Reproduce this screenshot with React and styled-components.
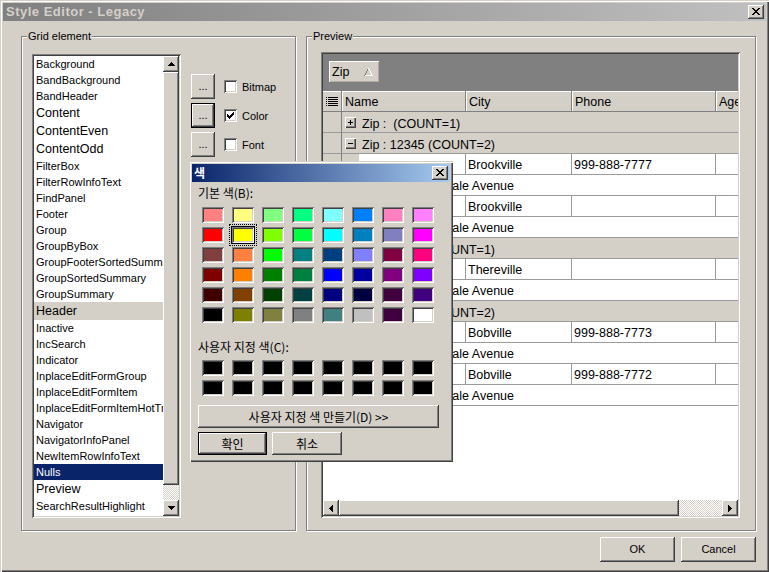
import React from 'react';
import styled, { createGlobalStyle, css } from 'styled-components';

const FACE = '#d4d0c8';
const UI = `'Liberation Sans', Arial, sans-serif`;
const KR = `'Noto Sans CJK KR', 'Liberation Sans', sans-serif`;
const LINE = '#9a9a9a';

const raised = css`
  box-shadow: inset -1px -1px #404040, inset 1px 1px #ffffff, inset -2px -2px #808080, inset 2px 2px ${FACE};
`;
const sunken = css`
  box-shadow: inset 1px 1px #808080, inset -1px -1px #ffffff, inset 2px 2px #404040, inset -2px -2px ${FACE};
`;
const frame = css`
  box-shadow: inset 1px 1px ${FACE}, inset 2px 2px #ffffff, inset -1px -1px #404040, inset -2px -2px #808080;
`;
const checker = css`
  background-color: #fff;
  background-image: repeating-conic-gradient(${FACE} 0 25%, #ffffff 0 50%);
  background-size: 2px 2px;
`;

const GlobalStyle = createGlobalStyle`
  *, *::before, *::after { box-sizing: border-box; }
  html, body { margin: 0; padding: 0; background: ${FACE}; }
  body { width: 769px; height: 572px; overflow: hidden; }
`;

/* ---------- pixel icons ---------- */
const PIX = { '#': '#000', w: '#fff', g: '#808080' };
const PixelIcon = ({ rows }) => (
  <svg width={rows[0].length} height={rows.length} shapeRendering="crispEdges" style={{ display: 'block' }}>
    {rows.flatMap((r, y) =>
      [...r].map((c, x) =>
        PIX[c] ? <rect key={`${x}-${y}`} x={x} y={y} width="1" height="1" fill={PIX[c]} /> : null
      )
    )}
  </svg>
);
const ICON = {
  x: ['##....##', '.##..##.', '..####..', '...##...', '..####..', '.##..##.', '##....##'],
  up: ['...#...', '..###..', '.#####.', '#######'],
  down: ['#######', '.#####.', '..###..', '...#...'],
  left: ['...#', '..##', '.###', '####', '.###', '..##', '...#'],
  right: ['#...', '##..', '###.', '####', '###.', '##..', '#...'],
  check: ['......#', '.....##', '#...###', '##.###.', '#####..', '.###...', '..#....'],
  plus: ['..#..', '..#..', '#####', '..#..', '..#..'],
  minus: ['.....', '.....', '#####', '.....', '.....'],
  lines: ['#.##########', '............', '#.##########', '............', '#.##########', '............', '#.##########', '............', '#.##########'],
  sort: ['....w....', '...g.w...', '...g.w...', '..g...w..', '..g...w..', '.g.....w.', '.g.....w.', 'gwwwwwwww'],
};

/* ---------- window ---------- */
const Window = styled.div`
  position: relative;
  width: 769px;
  height: 572px;
  padding: 3px;
  background: ${FACE};
  ${frame}
  display: flex;
  flex-direction: column;
  font-family: ${UI};
  font-size: 11px;
  color: #000;
`;
const TitleBar = styled.div`
  flex: none;
  height: 18px;
  display: flex;
  align-items: center;
  padding: 0 2px 0 ${p => p.$pad}px;
  background: linear-gradient(to right, ${p => p.$from}, ${p => p.$to});
`;
const TitleText = styled.span`
  font-family: ${p => (p.$kr ? KR : UI)};
  font-weight: bold;
  font-size: ${p => (p.$kr ? 12 : 13)}px;
  letter-spacing: ${p => (p.$kr ? 0 : 0.5)}px;
  line-height: 18px;
  color: ${p => p.$color};
  white-space: nowrap;
`;
const CaptionButton = styled.span`
  margin-left: auto;
  width: 16px;
  height: 14px;
  background: ${FACE};
  ${raised}
  display: flex;
  align-items: center;
  justify-content: center;
  padding: 0 1px 1px 0;
`;
const Body = styled.div`
  flex: 1;
  display: flex;
  flex-direction: column;
  padding: 15px 10px 0 18px;
`;
const GroupsRow = styled.div`
  display: flex;
  gap: 10px;
  height: 495px;
`;
const GroupBox = styled.div`
  position: relative;
  flex: none;
  width: ${p => p.$w}px;
  height: 100%;
  border: 1px solid #808080;
  box-shadow: inset 1px 1px #ffffff, 1px 1px #ffffff;
  display: flex;
  align-items: flex-start;
  padding: ${p => p.$pad};
`;
const Caption = styled.span`
  position: absolute;
  top: -7px;
  left: 5px;
  padding: 0 1px;
  background: ${FACE};
  font-size: 11px;
  line-height: 13px;
`;

/* ---------- list ---------- */
const ListBox = styled.div`
  flex: none;
  width: 149px;
  height: 464px;
  padding: 2px;
  background: #fff;
  ${sunken}
  display: flex;
`;
const ListItems = styled.div`
  flex: 1;
  min-width: 0;
  overflow: hidden;
  display: flex;
  flex-direction: column;
`;
const ListItem = styled.div`
  flex: none;
  height: ${p => (p.$big ? 18 : 16)}px;
  line-height: ${p => (p.$big ? 18 : 16)}px;
  padding-left: 2px;
  font-size: ${p => (p.$big ? 12.5 : 11)}px;
  white-space: nowrap;
  overflow: hidden;
  background: ${p => (p.$selected ? '#0a246a' : p.$hot ? FACE : '#fff')};
  color: ${p => (p.$selected ? '#fff' : '#000')};
`;
const ScrollBar = styled.div`
  flex: none;
  display: flex;
  flex-direction: ${p => (p.$vertical ? 'column' : 'row')};
  ${p => (p.$vertical ? 'width: 16px;' : 'height: 16px;')}
`;
const ScrollButton = styled.span`
  flex: none;
  width: 16px;
  height: 16px;
  background: ${FACE};
  ${raised}
  display: flex;
  align-items: center;
  justify-content: center;
`;
const Thumb = styled.span`
  flex: none;
  ${p => (p.$vertical ? `height: ${p.$size}px;` : `width: ${p.$size}px;`)}
  background: ${FACE};
  ${raised}
`;
const Track = styled.span`
  flex: 1;
  ${checker}
`;

/* ---------- options ---------- */
const OptionList = styled.div`
  display: flex;
  flex-direction: column;
  gap: 4px;
  margin: 20px 0 0 10px;
`;
const OptionRow = styled.div`
  display: flex;
  align-items: center;
  height: 25px;
`;
const Button = styled.button`
  flex: none;
  width: ${p => p.$w}px;
  height: ${p => p.$h}px;
  margin: 0;
  padding: 0 0 1px;
  border: none;
  background: ${FACE};
  font-family: ${p => (p.$kr ? KR : UI)};
  font-size: ${p => (p.$kr ? 12 : 11)}px;
  color: #000;
  display: flex;
  align-items: center;
  justify-content: center;
  ${p =>
    p.$default
      ? css`box-shadow: inset 0 0 0 1px #000, inset -2px -2px #404040, inset 2px 2px #ffffff, inset -3px -3px #808080, inset 3px 3px ${FACE};`
      : raised}
`;
const CheckBox = styled.span`
  flex: none;
  width: 13px;
  height: 13px;
  margin-left: 9px;
  background: #fff;
  ${sunken}
  display: flex;
  align-items: center;
  justify-content: center;
`;
const CheckLabel = styled.span`
  margin-left: 5px;
  font-size: 11px;
`;

/* ---------- grid ---------- */
const Grid = styled.div`
  flex: none;
  width: 419px;
  height: 466px;
  padding: 2px;
  background: #fff;
  ${sunken}
  display: flex;
  flex-direction: column;
  overflow: hidden;
  font-size: 12.5px;
`;
const GroupPanel = styled.div`
  flex: none;
  height: 37px;
  background: #808080;
  padding: 7px 0 0 6px;
`;
const GroupTag = styled.div`
  width: 50px;
  height: 21px;
  background: ${FACE};
  box-shadow: inset 1px 1px #ffffff, inset -1px -1px #b0aca4;
  display: flex;
  align-items: center;
  padding: 1px 6px 0 3px;
  justify-content: space-between;
`;
const Row = styled.div`
  flex: none;
  height: 21px;
  display: flex;
  overflow: hidden;
  ${p => p.$header && css`
    background: ${FACE};
    border-bottom: 1px solid #808080;
  `}
`;
const Indicator = styled.div`
  flex: none;
  width: 19px;
  background: ${FACE};
  border-right: 1px solid #808080;
  ${p => !p.$header && `border-bottom: 1px solid ${LINE};`}
  display: flex;
  align-items: center;
  justify-content: center;
  ${p => p.$header && 'box-shadow: inset 0 1px #fff;'}
`;
const HeaderCell = styled.div`
  flex: none;
  width: ${p => p.$w}px;
  border-left: 1px solid #fff;
  border-right: 1px solid #808080;
  box-shadow: inset 0 1px #fff;
  padding: 2px 0 0 2px;
  line-height: 19px;
  white-space: nowrap;
  overflow: hidden;
`;
const GroupCell = styled.div`
  flex: 1;
  background: ${FACE};
  border-bottom: 1px solid ${LINE};
  display: flex;
  align-items: center;
  padding: 3px 0 0 3px;
  white-space: pre;
`;
const ExpandBox = styled.span`
  flex: none;
  width: 11px;
  height: 11px;
  margin: -2px 6px 0 0;
  background: ${FACE};
  box-shadow: inset 1px 1px #ffffff, inset -1px -1px #404040, inset -2px -2px #808080;
  display: flex;
  align-items: center;
  justify-content: center;
  padding: 0 1px 1px 0;
`;
const Indent = styled.div`
  flex: none;
  width: 17px;
  background: ${FACE};
`;
const Cell = styled.div`
  flex: none;
  width: ${p => p.$w}px;
  background: #fff;
  border-right: 1px solid ${LINE};
  border-bottom: 1px solid ${LINE};
  padding: 2px 0 0 2px;
  line-height: 19px;
  white-space: nowrap;
  overflow: hidden;
`;
const PreviewCell = styled.div`
  flex: 1;
  background: #fff;
  border-bottom: 1px solid ${LINE};
  padding: 2px 0 0 19px;
  line-height: 19px;
  white-space: nowrap;
`;
const EmptyArea = styled.div`
  flex: 1;
  background: #fff;
`;

/* ---------- footer ---------- */
const Footer = styled.div`
  display: flex;
  justify-content: flex-end;
  gap: 6px;
  margin-top: 6px;
`;

/* ---------- color dialog ---------- */
const Dialog = styled.div`
  position: absolute;
  left: 189px;
  top: 161px;
  width: 264px;
  height: 301px;
  padding: 3px;
  background: ${FACE};
  ${frame}
  display: flex;
  flex-direction: column;
`;
const DialogBody = styled.div`
  display: flex;
  flex-direction: column;
  align-items: flex-start;
  padding: 0 0 0 6px;
  font-family: ${KR};
  font-size: 12px;
`;
const SectionLabel = styled.div`
  margin-top: ${p => p.$top}px;
  line-height: 14px;
  white-space: nowrap;
`;
const SwatchGrid = styled.div`
  margin: ${p => p.$top}px 0 0 4px;
  display: grid;
  grid-template-columns: repeat(8, 22px);
  grid-auto-rows: 16px;
  column-gap: 8px;
  row-gap: 4px;
`;
const Swatch = styled.span`
  display: block;
  background: ${p => p.$c};
  ${sunken}
  ${p => p.$selected && css`
    box-shadow: 0 0 0 1px #000, inset 1px 1px #808080, inset -1px -1px #ffffff, inset 2px 2px #404040, inset -2px -2px ${FACE};
    outline: 1px dotted #000;
    outline-offset: 2px;
  `}
`;
const DialogButtons = styled.div`
  display: flex;
  gap: 5px;
  margin-top: 4px;
`;
const WideWrap = styled.div`
  margin-top: 9px;
`;

/* ---------- data ---------- */
const ELEMENTS = [
  { n: 'Background' }, { n: 'BandBackground' }, { n: 'BandHeader' },
  { n: 'Content', big: true }, { n: 'ContentEven', big: true }, { n: 'ContentOdd', big: true },
  { n: 'FilterBox' }, { n: 'FilterRowInfoText' }, { n: 'FindPanel' }, { n: 'Footer' },
  { n: 'Group' }, { n: 'GroupByBox' }, { n: 'GroupFooterSortedSummary' }, { n: 'GroupSortedSummary' },
  { n: 'GroupSummary' }, { n: 'Header', big: true, hot: true }, { n: 'Inactive' }, { n: 'IncSearch' },
  { n: 'Indicator' }, { n: 'InplaceEditFormGroup' }, { n: 'InplaceEditFormItem' },
  { n: 'InplaceEditFormItemHotTrack' }, { n: 'Navigator' }, { n: 'NavigatorInfoPanel' },
  { n: 'NewItemRowInfoText' }, { n: 'Nulls', selected: true }, { n: 'Preview', big: true },
  { n: 'SearchResultHighlight' },
];

const BASIC = [
  ['#ff8080', '#ffff80', '#80ff80', '#00ff80', '#80ffff', '#0080ff', '#ff80c0', '#ff80ff'],
  ['#ff0000', '#ffff00', '#80ff00', '#00ff40', '#00ffff', '#0080c0', '#8080c0', '#ff00ff'],
  ['#804040', '#ff8040', '#00ff00', '#008080', '#004080', '#8080ff', '#800040', '#ff0080'],
  ['#800000', '#ff8000', '#008000', '#008040', '#0000ff', '#0000a0', '#800080', '#8000ff'],
  ['#400000', '#804000', '#004000', '#004040', '#000080', '#000040', '#400040', '#400080'],
  ['#000000', '#808000', '#808040', '#808080', '#408080', '#c0c0c0', '#400040', '#ffffff'],
];

const ADDR = '1234 Springdale Avenue';
const ROWS = [
  { t: 'group', open: false, text: 'Zip :  (COUNT=1)' },
  { t: 'group', open: true, text: 'Zip : 12345 (COUNT=2)' },
  { t: 'data', city: 'Brookville', phone: '999-888-7777' },
  { t: 'preview', text: ADDR },
  { t: 'data', city: 'Brookville', phone: '' },
  { t: 'preview', text: ADDR },
  { t: 'group', open: true, text: 'Zip : 23456 (COUNT=1)' },
  { t: 'data', city: 'Thereville', phone: '' },
  { t: 'preview', text: ADDR },
  { t: 'group', open: true, text: 'Zip : 34567 (COUNT=2)' },
  { t: 'data', city: 'Bobville', phone: '999-888-7773' },
  { t: 'preview', text: ADDR },
  { t: 'data', city: 'Bobville', phone: '999-888-7772' },
  { t: 'preview', text: ADDR },
];

const COLS = [
  { label: 'Name', w: 124 },
  { label: 'City', w: 106 },
  { label: 'Phone', w: 144 },
  { label: 'Age', w: 60 },
];

function GridRow({ row }) {
  if (row.t === 'group') {
    return (
      <Row>
        <Indicator />
        <GroupCell>
          <ExpandBox>
            <PixelIcon rows={row.open ? ICON.minus : ICON.plus} />
          </ExpandBox>
          {row.text}
        </GroupCell>
      </Row>
    );
  }
  if (row.t === 'preview') {
    return (
      <Row>
        <Indicator />
        <Indent />
        <PreviewCell>{row.text}</PreviewCell>
      </Row>
    );
  }
  return (
    <Row>
      <Indicator />
      <Indent />
      <Cell $w={107}></Cell>
      <Cell $w={106}>{row.city}</Cell>
      <Cell $w={144}>{row.phone}</Cell>
      <Cell $w={60}></Cell>
    </Row>
  );
}

export default function App() {
  return (
    <>
      <GlobalStyle />
      <Window>
        <TitleBar $from="#808080" $to="#c0c0c0" $pad={3}>
          <TitleText $color={FACE}>Style Editor - Legacy</TitleText>
          <CaptionButton>
            <PixelIcon rows={ICON.x} />
          </CaptionButton>
        </TitleBar>

        <Body>
          <GroupsRow>
            <GroupBox $w={275} $pad="17px 0 0 10px">
              <Caption>Grid element</Caption>
              <ListBox>
                <ListItems>
                  {ELEMENTS.map(e => (
                    <ListItem key={e.n} $big={e.big} $hot={e.hot} $selected={e.selected}>
                      {e.n}
                    </ListItem>
                  ))}
                </ListItems>
                <ScrollBar $vertical>
                  <ScrollButton><PixelIcon rows={ICON.up} /></ScrollButton>
                  <Thumb $vertical $size={413} />
                  <Track />
                  <ScrollButton><PixelIcon rows={ICON.down} /></ScrollButton>
                </ScrollBar>
              </ListBox>
              <OptionList>
                {[
                  { l: 'Bitmap', c: false },
                  { l: 'Color', c: true, d: true },
                  { l: 'Font', c: false },
                ].map(o => (
                  <OptionRow key={o.l}>
                    <Button $w={24} $h={25} $default={o.d}>...</Button>
                    <CheckBox>{o.c && <PixelIcon rows={ICON.check} />}</CheckBox>
                    <CheckLabel>{o.l}</CheckLabel>
                  </OptionRow>
                ))}
              </OptionList>
            </GroupBox>

            <GroupBox $w={450} $pad="15px 0 0 14px">
              <Caption>Preview</Caption>
              <Grid>
                <GroupPanel>
                  <GroupTag>
                    Zip
                    <PixelIcon rows={ICON.sort} />
                  </GroupTag>
                </GroupPanel>
                <Row $header>
                  <Indicator $header>
                    <PixelIcon rows={ICON.lines} />
                  </Indicator>
                  {COLS.map(c => (
                    <HeaderCell key={c.label} $w={c.w}>{c.label}</HeaderCell>
                  ))}
                </Row>
                {ROWS.map((r, i) => (
                  <GridRow key={i} row={r} />
                ))}
                <EmptyArea />
                <ScrollBar>
                  <ScrollButton><PixelIcon rows={ICON.left} /></ScrollButton>
                  <Thumb $size={340} />
                  <Track />
                  <ScrollButton><PixelIcon rows={ICON.right} /></ScrollButton>
                </ScrollBar>
              </Grid>
            </GroupBox>
          </GroupsRow>

          <Footer>
            <Button $w={75} $h={25}>OK</Button>
            <Button $w={75} $h={25}>Cancel</Button>
          </Footer>
        </Body>

        <Dialog>
          <TitleBar $from="#0a246a" $to="#a6caf0" $pad={2}>
            <TitleText $kr $color="#fff">색</TitleText>
            <CaptionButton>
              <PixelIcon rows={ICON.x} />
            </CaptionButton>
          </TitleBar>
          <DialogBody>
            <SectionLabel $top={4}>기본 색(B):</SectionLabel>
            <SwatchGrid $top={7}>
              {BASIC.flatMap((row, r) =>
                row.map((c, i) => <Swatch key={`${r}-${i}`} $c={c} $selected={r === 1 && i === 1} />)
              )}
            </SwatchGrid>
            <SectionLabel $top={17}>사용자 지정 색(C):</SectionLabel>
            <SwatchGrid $top={6}>
              {Array.from({ length: 16 }, (_, i) => (
                <Swatch key={i} $c="#000000" />
              ))}
            </SwatchGrid>
            <WideWrap>
              <Button $kr $w={241} $h={23}>사용자 지정 색 만들기(D) &gt;&gt;</Button>
            </WideWrap>
            <DialogButtons>
              <Button $kr $w={69} $h={23} $default>확인</Button>
              <Button $kr $w={70} $h={23}>취소</Button>
            </DialogButtons>
          </DialogBody>
        </Dialog>
      </Window>
    </>
  );
}
